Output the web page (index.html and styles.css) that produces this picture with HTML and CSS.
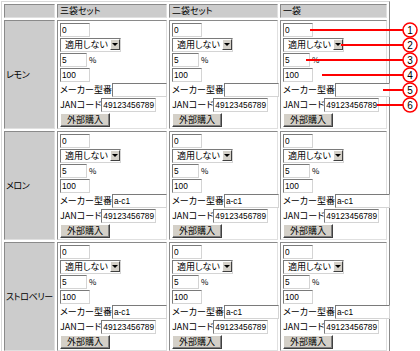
FILE: index.html
```html
<!DOCTYPE html>
<html lang="ja">

<head>
  <meta charset="UTF-8">
  <meta name="viewport" content="width=device-width, initial-scale=1.0">
  <title>商品設定</title>

  <link rel="stylesheet" href="styles.css">
</head>

<body>
  <table class="price-table">
    <thead>
      <tr>
        <th class="col-name"></th>
        <th class="col-3">三袋セット</th>
        <th class="col-2">二袋セット</th>
        <th class="col-1">一袋</th>
      </tr>
    </thead>
    <tbody id="rows"></tbody>
  </table>

  <svg class="notes" width="420" height="351" viewBox="0 0 420 351">
    <g class="note-lines">
      <line x1="310" y1="30" x2="404" y2="30" />
      <line x1="341" y1="45" x2="404" y2="45" />
      <line x1="306" y1="60" x2="404" y2="60" />
      <line x1="322" y1="75" x2="404" y2="75" />
      <line x1="383" y1="90" x2="404" y2="90" />
      <line x1="377" y1="105" x2="404" y2="105" />
    </g>
    <g class="note-marks"></g>
  </svg>

  <script>
    const rows = document.querySelector('#rows');
    const marks = document.querySelector('.note-marks');
    const products = [
      { name: 'レモン', maker: '' },
      { name: 'メロン', maker: 'a-c1' },
      { name: 'ストロベリー', maker: 'a-c1' }
    ];

    function cellHtml(maker) {
      return `
        <td class="cell">
          <div class="line"><input class="text w30" type="text" value="0"></div>
          <div class="line">
            <span class="select"><select><option>適用しない</option></select><span class="select-btn"></span></span>
          </div>
          <div class="line"><input class="text w27" type="text" value="5"><span class="unit">%</span></div>
          <div class="line"><input class="text w30" type="text" value="100"></div>
          <div class="line"><span class="label">メーカー型番</span><input class="text w55" type="text" value="${maker}"></div>
          <div class="line"><span class="label">JANコード</span><input class="text w55" type="text" value="49123456789"></div>
          <div class="line"><button class="buy-btn" type="button">外部購入</button></div>
        </td>`;
    }

    let content = '';
    for (const item of products) {
      content += `<tr><th class="name">${item.name}</th>`;
      for (let i = 0; i < 3; i++) {
        content += cellHtml(item.maker);
      }
      content += '</tr>';
    }
    rows.innerHTML = content;

    // 注釈の丸数字
    let markup = '';
    for (let i = 1; i <= 6; i++) {
      const y = 15 + i * 15;
      markup += `<circle cx="410" cy="${y}" r="7" /><text x="410" y="${y + 4}">${i}</text>`;
    }
    marks.innerHTML = markup;
  </script>
</body>

</html>
```

FILE: styles.css
```css
* {
  margin: 0;
  padding: 0;
  box-sizing: border-box;
}

body {
  background-color: #fff;
  font-family: "Noto Sans CJK JP", sans-serif;
  font-size: 9px;
  font-feature-settings: "palt";
  color: #000;
  position: relative;
  width: 420px;
  height: 351px;
  overflow: hidden;
}

.price-table {
  margin: 1px 0 0 1px;
  width: 389px;
  table-layout: fixed;
  border-collapse: separate;
  border-spacing: 2px;
  border: 1px solid;
  border-color: #d8d8d8 #8a8a8a #8a8a8a #d8d8d8;
}

.price-table th,
.price-table td {
  border: 1px solid;
  border-color: #8a8a8a #e0e0e0 #e0e0e0 #8a8a8a;
  text-align: left;
  font-weight: normal;
  vertical-align: middle;
}

.price-table thead th {
  height: 14px;
  background-color: #cccccc;
  padding-left: 2px;
  line-height: 12px;
}

.col-name {
  width: 51px;
}

.col-3 {
  width: 110px;
}

.col-2 {
  width: 109px;
}

.col-1 {
  width: 107px;
}

.name {
  background-color: #cccccc;
  padding-left: 1px;
  white-space: nowrap;
  letter-spacing: -0.4px;
}

.cell {
  padding: 1px 0 1px 2px;
  background-color: #fff;
}

.line {
  display: flex;
  align-items: center;
  height: 15px;
}

.text {
  height: 14px;
  border: 1px solid;
  border-color: #7a7a7a #d4d4d4 #d4d4d4 #7a7a7a;
  background-color: #fff;
  font-family: "Liberation Sans", sans-serif;
  font-size: 8.3px;
  padding: 0 0 0 1px;
  outline: none;
}

.w27 {
  width: 27px;
}

.w30 {
  width: 30px;
}

.w55 {
  width: 55px;
}

.unit {
  margin-left: 2px;
  font-size: 8px;
}

.label {
  white-space: nowrap;
}

.select {
  display: inline-flex;
  align-items: center;
  width: 61px;
  height: 14px;
  border: 1px solid;
  border-color: #7a7a7a #d4d4d4 #d4d4d4 #7a7a7a;
  background-color: #fff;
}

.select select {
  appearance: none;
  -webkit-appearance: none;
  border: none;
  background: transparent;
  font-family: "Noto Sans CJK JP", sans-serif;
  font-feature-settings: "palt";
  font-size: 9px;
  width: 48px;
  height: 12px;
  line-height: 12px;
  padding-left: 4px;
  outline: none;
}

.select-btn {
  width: 10px;
  height: 11px;
  margin-left: 1px;
  background-color: #d4d0c8;
  border: 1px solid;
  border-color: #fff #404040 #404040 #fff;
  display: flex;
  align-items: center;
  justify-content: center;
}

.select-btn::after {
  content: "";
  border-left: 3px solid transparent;
  border-right: 3px solid transparent;
  border-top: 3px solid #000;
}

.buy-btn {
  width: 50px;
  height: 14px;
  background-color: #d4d0c8;
  border: 1px solid;
  border-color: #fff #404040 #404040 #fff;
  box-shadow: inset -1px -1px #808080;
  font-family: "Noto Sans CJK JP", sans-serif;
  font-feature-settings: "palt";
  font-size: 9px;
  line-height: 11px;
  color: #000;
}

.notes {
  position: absolute;
  top: 0;
  left: 0;
  pointer-events: none;
}

.note-lines line {
  stroke: #ff0000;
  stroke-width: 2;
}

.note-marks circle {
  fill: #fff;
  stroke: #ff0000;
  stroke-width: 1.5;
}

.note-marks text {
  font-family: "Liberation Sans", sans-serif;
  font-size: 10px;
  text-anchor: middle;
  fill: #000;
}
```
